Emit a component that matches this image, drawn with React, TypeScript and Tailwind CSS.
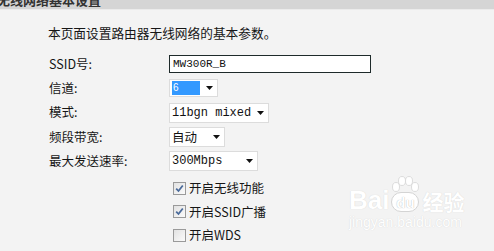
import React from "react";

const cjk = "font-['Noto_Sans_CJK_SC',sans-serif]";
const mono = "font-['Liberation_Mono','Noto_Sans_CJK_SC',monospace]";

function Arrow() {
  return (
    <svg width="7" height="4" viewBox="0 0 7 4" className="shrink-0">
      <path d="M0 0 H7 L3.5 4 Z" fill="#111" />
    </svg>
  );
}

interface SelectProps {
  width: string;
  children: React.ReactNode;
}

function FakeSelect({ width, children }: SelectProps) {
  return (
    <div
      className={`${width} h-[20px] bg-white border border-[#dcdcdc] flex items-center justify-between pl-[2px] pr-[4px]`}
    >
      {children}
      <Arrow />
    </div>
  );
}

function CheckBox({ checked }: { checked: boolean }) {
  return (
    <div className="w-[13px] h-[13px] border border-[#9a9a9a] bg-gradient-to-br from-[#e2e2e2] to-[#fbfbfb] flex items-center justify-center shrink-0">
      {checked && (
        <svg width="9" height="9" viewBox="0 0 9 9">
          <path d="M1.2 4.6 L3.5 7 L7.8 1.5" stroke="#4a6a9a" strokeWidth="1.8" fill="none" />
        </svg>
      )}
    </div>
  );
}

function Row({ label, children }: { label?: string; children: React.ReactNode }) {
  return (
    <div className="h-[24.3px] flex items-center">
      <div className={`w-[120px] text-[12.5px] text-[#161616] ${cjk}`}>{label}</div>
      {children}
    </div>
  );
}

export default function App() {
  const checks = [
    { text: "开启无线功能", on: true },
    { text: "开启SSID广播", on: true },
    { text: "开启WDS", on: false },
  ];

  return (
    <div className={`w-[494px] h-[251px] bg-[#f3f3f3] relative overflow-hidden ${cjk}`}>
      <div className="h-[10px] bg-[#d5d5d5] border-b border-[#ebebeb] overflow-hidden">
        <div className="text-[13px] font-bold leading-[13px] -mt-[7px] -ml-[3px] text-[#333]">
          无线网络基本设置
        </div>
      </div>

      <div className="pl-[48px]">
        <p className="pt-[15px] text-[12.7px] leading-[16px] text-[#161616]">
          本页面设置路由器无线网络的基本参数。
        </p>

        <div className="mt-[11px] pl-[1px]">
          <Row label="SSID号:">
            <div className={`w-[202px] h-[18px] bg-white border border-[#1e2a2a] flex items-center pl-[3px] text-[11px] text-[#111] ${mono}`}>
              MW300R_B
            </div>
          </Row>
          <Row label="信道:">
            <div className="w-[49px] h-[18px] bg-white border border-[#dcdcdc] flex items-center justify-between pl-[2px] pr-[4px]">
              <div className="w-[28px] h-[14px] bg-[#3399ff] text-white text-[10px] leading-[14px] pl-[1px] font-['Liberation_Sans',sans-serif]">
                6
              </div>
              <Arrow />
            </div>
          </Row>
          <Row label="模式:">
            <FakeSelect width="w-[100px]">
              <span className={`text-[12px] text-[#111] ${mono}`}>11bgn mixed</span>
            </FakeSelect>
          </Row>
          <Row label="频段带宽:">
            <FakeSelect width="w-[56px]">
              <span className="text-[12.5px] text-[#111]">自动</span>
            </FakeSelect>
          </Row>
          <Row label="最大发送速率:">
            <FakeSelect width="w-[89px]">
              <span className={`text-[12px] text-[#111] ${mono}`}>300Mbps</span>
            </FakeSelect>
          </Row>

          <div className="mt-[3.5px]">
            {checks.map((c) => (
              <div key={c.text} className="h-[23.3px] flex items-center pl-[124px]">
                <CheckBox checked={c.on} />
                <span className="ml-[3px] text-[12.5px] text-[#161616]">{c.text}</span>
              </div>
            ))}
          </div>
        </div>
      </div>

      <div className="absolute left-[349px] top-[176px] flex flex-col items-start text-white [text-shadow:0_0_1px_#cfcfcf]">
        <div className="flex items-end leading-none">
          <span className="text-[26px] font-bold font-['Liberation_Sans',sans-serif] leading-[24px]">Bai</span>
          <div className="relative w-[32px] h-[36px] flex items-end justify-center">
            <svg width="32" height="22" viewBox="0 0 32 22" className="absolute top-0 left-0">
              <ellipse cx="7" cy="11" rx="3.5" ry="4.5" fill="#fff" stroke="#d4d4d4" strokeWidth="0.8" />
              <ellipse cx="13" cy="5" rx="3.5" ry="4.5" fill="#fff" stroke="#d4d4d4" strokeWidth="0.8" />
              <ellipse cx="20" cy="5" rx="3.5" ry="4.5" fill="#fff" stroke="#d4d4d4" strokeWidth="0.8" />
              <ellipse cx="26" cy="11" rx="3.5" ry="4.5" fill="#fff" stroke="#d4d4d4" strokeWidth="0.8" />
            </svg>
            <div className="w-[28px] h-[20px] rounded-full bg-white border border-[#d4d4d4] flex items-center justify-center text-[15px] font-bold text-white [text-shadow:0_0_1px_#a8a8a8] font-['Liberation_Sans',sans-serif]">
              du
            </div>
          </div>
          <span className="text-[21px] font-bold ml-[1px] leading-[22px]">经验</span>
        </div>
        <div className="text-[14px] leading-[16px] mt-[2px] font-['Liberation_Sans',sans-serif]">
          jingyan.baidu.com
        </div>
      </div>
    </div>
  );
}
